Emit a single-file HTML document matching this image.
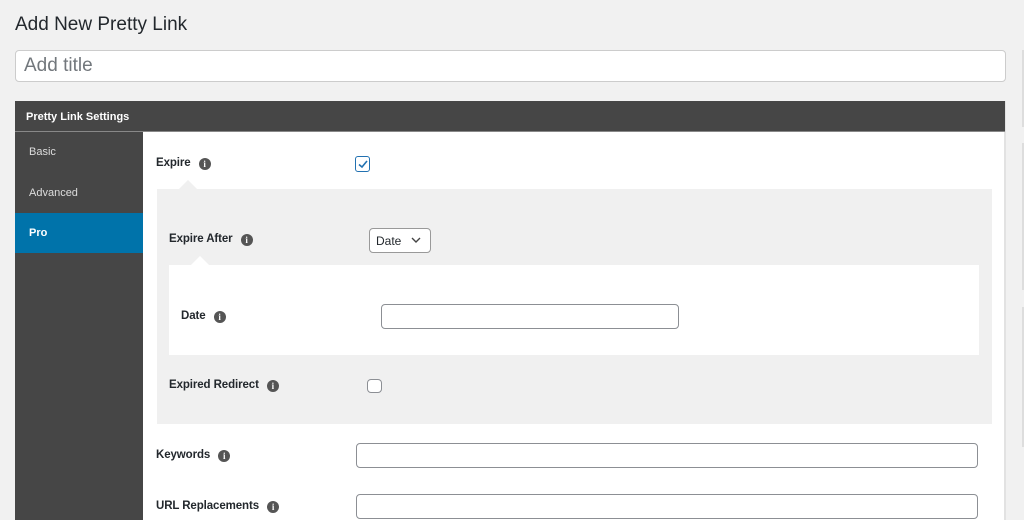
<!DOCTYPE html>
<html><head><style>
*{box-sizing:border-box;margin:0;padding:0}
body{width:1024px;height:520px;overflow:hidden;background:#f1f1f1;font-family:"Liberation Sans",sans-serif;position:relative;color:#23282d}
.a{position:absolute}
.lbl{position:absolute;font-size:11.5px;font-weight:bold;color:#23282d;white-space:nowrap;letter-spacing:-0.1px}
.i{display:inline-block;width:12px;height:12px;border-radius:50%;background:#555;color:#fff;font-size:9px;line-height:12px;text-align:center;font-family:"Liberation Serif",serif;font-weight:bold;vertical-align:-1px;margin-left:8px}
.inp{position:absolute;background:#fff;border:1px solid #8c8f94;border-radius:4px}
.tri{position:absolute;width:0;height:0;border-left:9px solid transparent;border-right:9px solid transparent}
.tab{position:absolute;left:15px;width:128px;height:40px;font-size:11px;color:#ddd;padding:14px 0 0 14px}
</style></head><body>
<div class="a" style="left:15px;top:14px;font-size:19px;color:#23282d">Add New Pretty Link</div>
<div class="inp" style="left:15px;top:50px;width:991px;height:32px;border-color:#ccc"></div>
<div class="a" style="left:24px;top:55px;font-size:19px;color:#72777c">Add title</div>
<div class="a" style="left:1022px;top:50px;width:2px;height:77px;background:#ddd"></div>
<div class="a" style="left:1022px;top:143px;width:2px;height:147px;background:#ddd"></div>
<div class="a" style="left:1022px;top:307px;width:2px;height:140px;background:#ddd"></div>

<div class="a" style="left:15px;top:101px;width:991px;height:419px;background:#fff;border-right:2px solid #e2e2e2"></div>
<div class="a" style="left:15px;top:101px;width:990px;height:31px;background:#464646;border-bottom:1px solid #888"></div>
<div class="a" style="left:26px;top:111px;font-size:11px;font-weight:bold;color:#fff">Pretty Link Settings</div>
<div class="a" style="left:15px;top:132px;width:128px;height:388px;background:#464646"></div>
<div class="tab" style="top:132px">Basic</div>
<div class="tab" style="top:173px">Advanced</div>
<div class="tab" style="top:213px;background:#0073aa;color:#fff;font-weight:bold">Pro</div>

<div class="lbl" style="left:156px;top:157px">Expire<span class="i">i</span></div>
<div class="a" style="left:355px;top:156px;width:15px;height:16px;border:1.5px solid #2271b1;border-radius:3px;background:#fff"></div>
<svg class="a" style="left:355px;top:156px" width="16" height="16"><path d="M4 8.5 L7 11 L12 5" stroke="#2271b1" stroke-width="1.6" fill="none"/></svg>

<div class="a" style="left:157px;top:189px;width:835px;height:235px;background:#f0f0f0"></div>
<div class="tri" style="left:179px;top:180px;border-bottom:9px solid #f0f0f0"></div>
<div class="lbl" style="left:169px;top:233px">Expire After<span class="i">i</span></div>
<div class="inp" style="left:369px;top:228px;width:62px;height:25px;border-color:#999"></div>
<div class="a" style="left:376px;top:234px;font-size:12px;color:#23282d">Date</div>
<svg class="a" style="left:411px;top:236px" width="10" height="8"><path d="M1 2 L5 6 L9 2" stroke="#444" stroke-width="1.4" fill="none"/></svg>

<div class="a" style="left:169px;top:265px;width:810px;height:90px;background:#fff"></div>
<div class="tri" style="left:191px;top:256px;border-bottom:9px solid #fff"></div>
<div class="lbl" style="left:181px;top:310px">Date<span class="i">i</span></div>
<div class="inp" style="left:381px;top:304px;width:298px;height:25px"></div>

<div class="lbl" style="left:169px;top:379px">Expired Redirect<span class="i">i</span></div>
<div class="inp" style="left:367px;top:379px;width:15px;height:14px"></div>

<div class="lbl" style="left:156px;top:449px">Keywords<span class="i">i</span></div>
<div class="inp" style="left:356px;top:443px;width:622px;height:25px"></div>
<div class="lbl" style="left:156px;top:500px">URL Replacements<span class="i">i</span></div>
<div class="inp" style="left:356px;top:494px;width:622px;height:25px"></div>
</body></html>
